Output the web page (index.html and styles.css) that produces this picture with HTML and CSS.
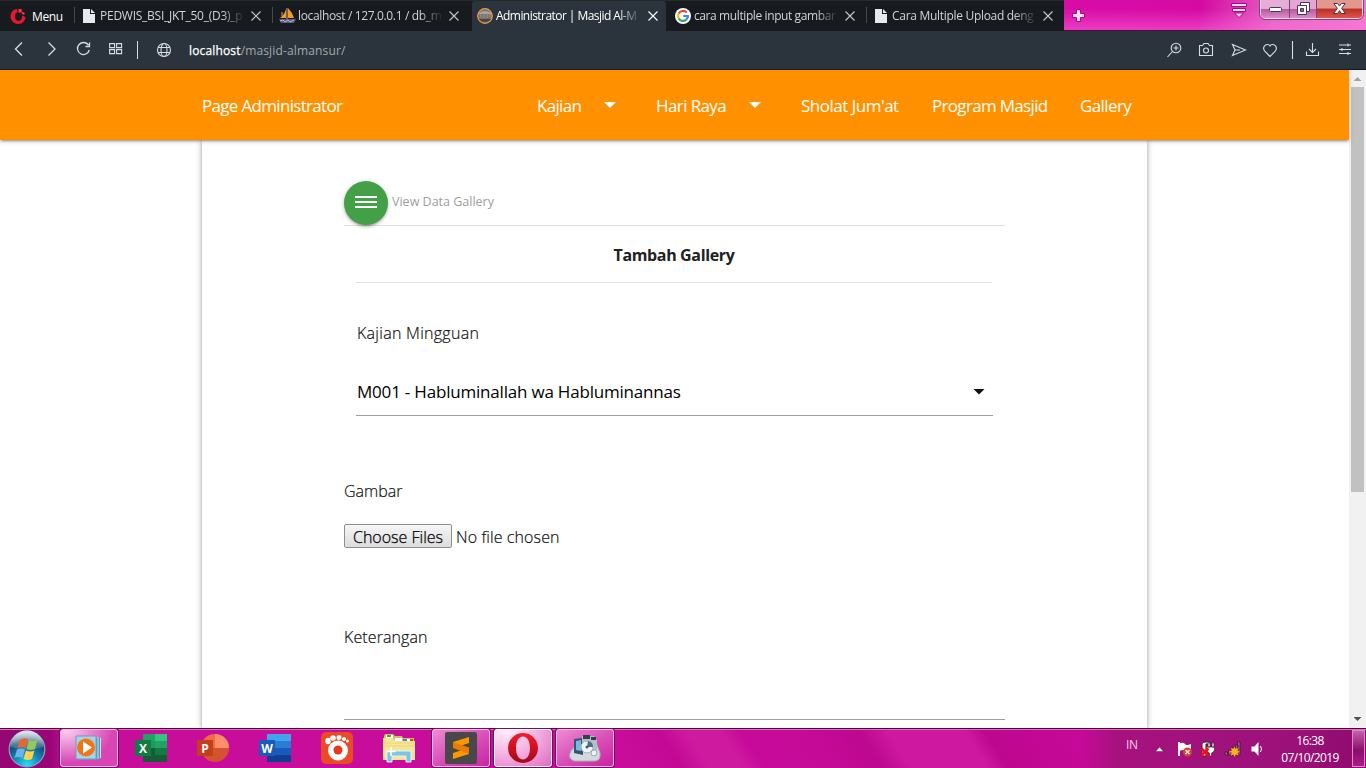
FILE: index.html
```html
<!DOCTYPE html>
<html lang="id">
<head>
<meta charset="utf-8">
<title>Administrator | Masjid Al-Mansur</title>
<link rel="stylesheet" href="styles.css">
</head>
<body>
<header class="tabs">
  <div class="menu">
    <svg width="17" height="17" viewBox="0 0 17 17"><path d="M7 1C3 1.500 .5 4.500 .5 8.500S4 16 8.300 16c4 0 7-3 7.200-7L12 7.500c.3 3-1.200 5.300-3.500 5.300S4.800 11 4.800 8.500 6.300 4.500 7.800 4z" fill="#e9162f"/><path d="M8.500 1h3.200v3.600H8.500z" fill="#ff3145"/><path d="M12.500 3.500l2.600 2-1.500 1.500-2-1.500z" fill="#ff3145"/></svg>
    <span>Menu</span>
  </div>
  <div class="tab sep">
    <svg class="fav" width="12" height="14" viewBox="0 0 12 14"><path d="M0 0h7v5h5v9H0zM8 0l4 4H8z" fill="#e6eaed"/></svg>
    <span class="t t1">PEDWIS_BSI_JKT_50_(D3)_p</span>
    <svg class="x" width="10" height="10" viewBox="0 0 10 10"><path d="M.5.5l9 9M9.500.5l-9 9"/></svg>
  </div>
  <div class="tab sep tab2">
    <svg class="fav" width="17" height="16" viewBox="0 0 17 16"><path d="M7 1v9H1q5-4 6-9M9 0q4 4 6 10H9z" fill="#f29b27"/><path d="M8 0v11M3 4v4" stroke="#c9a78c"/><path d="M0 11h17l-2 4H2z" fill="#565b87"/><path d="M1 13l3-1 2 2 3-2 2 2 4-2" stroke="#bbb" fill="none"/></svg>
    <span class="t t2">localhost / 127.0.0.1 / db_m</span>
    <svg class="x" width="10" height="10" viewBox="0 0 10 10"><path d="M.5.5l9 9M9.500.5l-9 9"/></svg>
  </div>
  <div class="tab active">
    <svg class="fav" width="16" height="16" viewBox="0 0 16 16"><circle cx="8" cy="8" r="7.300" fill="#76726f" stroke="#f19b35" stroke-width="1.200"/><path d="M2 5q6-4 12 0v1H2z" fill="#a6a4a5"/><path d="M4 6v4M7 5v5M10 5v5M13 6v3" stroke="#98928d"/><path d="M2 11h12q-2 3-6 3t-6-3" fill="#494447"/></svg>
    <span class="t t3">Administrator | Masjid Al-M</span>
    <svg class="x" width="10" height="10" viewBox="0 0 10 10"><path d="M.5.5l9 9M9.500.5l-9 9"/></svg>
  </div>
  <div class="tab tab4">
    <svg class="fav" width="16" height="16" viewBox="0 0 16 16"><circle cx="8" cy="8" r="8" fill="#fff"/><g fill="none" stroke-width="2.200"><path d="M11.700 4.500A5 5 0 0 0 3.700 5.500" stroke="#ea4335"/><path d="M3.700 5.500a5 5 0 0 0 0 5" stroke="#fbbc05"/><path d="M3.700 10.500a5 5 0 0 0 7.600 1.200" stroke="#34a853"/><path d="M11.300 11.700A5 5 0 0 0 13 8H8.300" stroke="#4285f4"/></g></svg>
    <span class="t t4">cara multiple input gambar</span>
    <svg class="x" width="10" height="10" viewBox="0 0 10 10"><path d="M.5.5l9 9M9.500.5l-9 9"/></svg>
  </div>
  <div class="tab sepl tab5">
    <svg class="fav" width="12" height="14" viewBox="0 0 12 14"><path d="M0 0h7v5h5v9H0zM8 0l4 4H8z" fill="#e6eaed"/></svg>
    <span class="t t5">Cara Multiple Upload deng</span>
    <svg class="x" width="10" height="10" viewBox="0 0 10 10"><path d="M.5.5l9 9M9.500.5l-9 9"/></svg>
  </div>
  <div class="aero">
    <svg class="plus" width="13" height="13" viewBox="0 0 13 13"><path d="M4.500 .5h4v4h4v4h-4v4h-4v-4h-4v-4h4z" fill="#ffd9f3" stroke="#a30d81"/></svg>
    <svg class="recent" width="16" height="15" viewBox="0 0 16 15"><path d="M.5.5h15v3H.5zM1.500 5.500h13v3h-13zM3.500 10h9L8 14.500z" fill="#ffd9f3" stroke="#a30d81"/></svg>
    <div class="winbtns">
      <div class="wb w1"><svg width="13" height="7" viewBox="0 0 13 7"><rect x=".5" y="1.500" width="12" height="4" rx="1" fill="#fff" stroke="#4a3852"/></svg></div>
      <div class="wb w2"><svg width="13" height="13" viewBox="0 0 13 13"><g fill="#fff" stroke="#4a3852"><path d="M3.500.5h9v9h-9z"/><path d="M.5 3.500h9v9h-9z"/><path d="M3.500 6.500h3v3h-3z" fill="#b34b9c"/></g></svg></div>
      <div class="wb w3"><svg width="13" height="11" viewBox="0 0 13 11"><path d="M.8.5h3.700l2 2.600 2-2.600h3.700L8.600 5.300l3.800 5.200H8.500l-2-2.800-2 2.800H.6l3.800-5.200z" fill="#fff" stroke="#4a3540"/></svg></div>
    </div>
  </div>
</header>

<div class="address">
  <svg width="345" height="38" viewBox="0 0 345 38" class="lefticons"><g fill="none" stroke="#d7dde1" stroke-width="1.300"><path d="M22 11.500l-6.500 6.500 6.500 6.500M48.500 11.500L55 18l-6.500 6.500"/><path d="M88.500 14.200A6 6 0 1 0 89.300 19M89.500 11.500v4h-4"/><path d="M109.600 12.600h5v4h-5zM116.600 12.600h5v4h-5zM109.600 18.600h5v4h-5zM116.600 18.600h5v4h-5z" stroke-width="1.100"/><path d="M137.500 10v18" stroke-width="1"/><g stroke-width="1.100"><circle cx="164" cy="19" r="6.500"/><ellipse cx="164" cy="19" rx="3" ry="6.500"/><path d="M158 16.500h12M158 21.500h12"/></g></g></svg>
  <p class="url"><b>localhost</b>/masjid-almansur/</p>
  <svg class="righticons" width="200" height="38" viewBox="1160 0 200 38"><g fill="none" stroke="#d7dde1" stroke-width="1.100"><circle cx="1176" cy="17" r="4.800"/><path d="M1172.500 20.500l-5 5.500M1173.500 17h5M1176 14.500v5"/><path d="M1199.500 14.500h3l1.500-2h4l1.500 2h3v10h-13z"/><circle cx="1206" cy="19.500" r="2.500"/><path d="M1232.500 13.500l13 5.500-13 5.500 2.500-5.500zM1235 19h5"/><path d="M1270 25.500l-5-5c-4-5 2.500-9.500 5-5.500 2.500-4 9 .5 5 5.500z"/><path d="M1292.500 10v18M1312.500 12v9M1309 18l3.500 3.500 3.500-3.500M1306.500 20.500v4h12v-4"/><path d="M1339 14h12M1339 18.500h12M1339 22.500h12M1348 12.500v3M1342 17v3M1348 21v3"/></g></svg>
</div>

<div class="viewport">
  <main class="page">
    <nav class="nav">
      <a class="brand">Page Administrator</a>
      <a class="n1">Kajian</a><i class="caret c1"></i>
      <a class="n2">Hari Raya</a><i class="caret c2"></i>
      <a class="n3">Sholat Jum'at</a>
      <a class="n4">Program Masjid</a>
      <a class="n5">Gallery</a>
    </nav>
    <section class="card">
      <div class="view-row">
        <span class="round"><i></i><i></i><i></i></span>
        <span class="view-text">View Data Gallery</span>
      </div>
      <h1 class="title"><span>Tambah Gallery</span></h1>
      <label class="label kajian"><span>Kajian Mingguan</span></label>
      <div class="select"><span class="value">M001 - Habluminallah wa Habluminannas</span><i class="caret dark"></i></div>
      <label class="label gambar"><span>Gambar</span></label>
      <div class="file"><span class="choose"><span>Choose Files</span></span><span class="nofile">No file chosen</span></div>
      <label class="label ket"><span>Keterangan</span></label>
      <div class="field"></div>
    </section>
  </main>
  <aside class="scroll"><i class="up"></i><div class="thumb"></div><i class="down"></i></aside>
</div>

<footer class="taskbar">
  <div class="start"><svg width="38" height="38" viewBox="0 0 38 38"><defs><radialGradient id="orb" cx=".5" cy=".95" r=".9"><stop offset="0" stop-color="#26e0ff"/><stop offset=".4" stop-color="#1687b7"/><stop offset=".75" stop-color="#174871"/><stop offset="1" stop-color="#7c9bb0"/></radialGradient><linearGradient id="shine" x2="0" y2="1"><stop stop-color="#fff" stop-opacity=".75"/><stop offset="1" stop-color="#fff" stop-opacity=".1"/></linearGradient></defs><circle cx="19" cy="19" r="17.800" fill="url(#orb)" stroke="#80a9bf" stroke-width="1.200"/><path d="M2.500 17a16.500 16.500 0 0 1 33 0q-15 5-33 0" fill="url(#shine)"/><path d="M12 10q4-3 8-1l-2.500 9q-4-2-8 0z" fill="#ec642c"/><path d="M21 10q4 2 8.500 0L27 19q-4 2-8.500 0z" fill="#94c75c"/><path d="M9 19.500q4-2 8 0l-2.500 8.500q-4-2-8 0z" fill="#67b5e9"/><path d="M18 20.500q4 2 8.500 0L24 29q-4 2-8.500 0z" fill="#ffd34a"/></svg></div>
  <div class="task on wmp"><svg width="27" height="26" viewBox="0 0 27 26"><path d="M5 2l21 1v20l-4 2H5z" fill="#5597c0"/><path d="M1 1h20v23H1z" fill="#abd1e9" stroke="#6b9ebd"/><path d="M23 2v22M25.500 3v20" stroke="#c5e7f5"/><circle cx="11" cy="12.500" r="9" fill="#ee7615"/><path d="M8 6.500l9 6-9 6z" fill="#fff"/></svg></div>
  <div class="task"><svg width="32" height="28" viewBox="0 0 32 28"><path d="M8 0h12v28H8z" fill="#21a366"/><path d="M20 0h12v7H20z" fill="#33c481"/><path d="M8 7h12v7H8z" fill="#1b9a5e"/><path d="M20 7h12v7H20z" fill="#21a366"/><path d="M8 14h12v14H8z" fill="#185c37"/><path d="M20 14h12v7H20z" fill="#107c41"/><path d="M20 21h12v7H20z" fill="#185c37"/><path d="M0 6h16v16H0z" fill="#107c41"/><text x="8" y="18.500" class="ol">X</text></svg></div>
  <div class="task"><svg width="32" height="28" viewBox="0 0 32 28"><circle cx="18" cy="14" r="14" fill="#d35230"/><path d="M18 0v14h14A14 14 0 0 0 18 0" fill="#ff8f6b"/><path d="M18 0A14 14 0 0 0 4 14h14z" fill="#ed6c47"/><path d="M0 6h16v16H0z" fill="#c43e1c"/><text x="8" y="18.500" class="ol">P</text></svg></div>
  <div class="task"><svg width="32" height="28" viewBox="0 0 32 28"><path d="M8 0h24v7H8z" fill="#41a5ee"/><path d="M8 7h24v7H8z" fill="#2b7cd3"/><path d="M8 14h24v7H8z" fill="#185abd"/><path d="M8 21h24v7H8z" fill="#103f91"/><path d="M0 6h16v16H0z" fill="#185abd"/><text x="8" y="18.500" class="ol">W</text></svg></div>
  <div class="task"><svg width="32" height="32" viewBox="0 0 32 32"><rect width="32" height="32" rx="5" fill="#ed4924"/><g fill="#fff"><circle cx="17" cy="18.500" r="10"/><ellipse cx="7" cy="9" rx="2.700" ry="3.300"/><circle cx="12" cy="6" r="2.800"/><circle cx="18" cy="5.500" r="2.500"/><circle cx="23" cy="7" r="2"/><circle cx="26.500" cy="9" r="1.500"/></g><circle cx="17" cy="18" r="4.500" fill="#e6381e"/></svg></div>
  <div class="task"><svg width="32" height="30" viewBox="0 0 32 30"><path d="M1 3l1-2h8l2 2h7l1 2h11v22H1z" fill="#d9bd5d"/><path d="M3 2h7v4H3z" fill="#fff"/><path d="M4 2h4v2H4z" fill="#20b64b"/><path d="M12 5h7v3h-7zM21 6h8v3h-8z" fill="#fff"/><path d="M20 6h4v2h-4z" fill="#398ad8"/><path d="M27 6h3v2h-3z" fill="#da3f32"/><path d="M0 5h10l2 3h20v19H0z" fill="#f7e596"/><path d="M1 10h30M1 13h30" stroke="#ecd47a"/><path d="M4 29V18h24v11h-5v-6H9v6z" fill="#7fc4e2" stroke="#daf5ff"/><path d="M8 14v9M3.500 18.500h9" stroke="#fff" stroke-width="1.500"/></svg></div>
  <div class="task on subl"><svg width="32" height="32" viewBox="0 0 32 32"><rect width="32" height="32" rx="2" fill="#484848"/><path d="M8 10l16-5v6l-9 3 9 3v5L8 27v-6l9-3-9-3z" fill="#ff9800"/><path d="M8 10l16 5.500V22L8 16z" fill="#e97d00"/></svg></div>
  <div class="task on bright"><svg width="32" height="32" viewBox="0 0 32 32"><defs><linearGradient id="op" x2="0" y2="1"><stop stop-color="#f51b2b"/><stop offset="1" stop-color="#a30815"/></linearGradient></defs><path d="M16 1a15 15 0 1 0 0 30 15 15 0 0 0 0-30m0 3.500c4.500 0 7 5 7 11.500s-2.500 11.500-7 11.500S9 22.500 9 16 11.500 4.500 16 4.500" fill="url(#op)" fill-rule="evenodd"/></svg></div>
  <div class="task on cam"><svg width="32" height="28" viewBox="0 0 32 28"><path d="M2 17q-4 7 3 10h20q7 0 6-8l-3-8H7z" fill="#d3dadd" stroke="#a5b1b9"/><path d="M5 5l9-1v17l-9-2z" fill="#34556e"/><path d="M7 7l5-1v11l-5-1z" fill="#78b7df"/><path d="M13 2h12l3 4v10H13z" fill="#b3c0c8"/><path d="M14 1h7v4h-7zM22 3h5v3h-5z" fill="#343f46"/><circle cx="18" cy="13" r="6" fill="#eef5fa" stroke="#a3b2bd"/><path d="M18 13l1-6a6 6 0 0 1 5 6z" fill="#4e6c84"/><circle cx="18" cy="13" r="1.500" fill="#4a5963"/><circle cx="25" cy="19" r="3" fill="#eef2f4" stroke="#9aa8b1"/></svg></div>
  <div class="tray">
    <span class="lang">IN</span>
    <svg class="trayicons" width="115" height="20" viewBox="1152 0 115 20"><path d="M1155.500 12.500h8l-4-4.500z" fill="#fff" stroke="#5e1651" stroke-width=".5"/><g><path d="M1178 3h2v14h-2zM1180 4q4-1 5 1t6 0v8q-4 1-6-1t-5 0z" fill="#fff"/><circle cx="1187.500" cy="13" r="4.500" fill="#df3e2b"/><path d="M1185.500 11l4 4M1189.500 11l-4 4" stroke="#fff" stroke-width="1.400"/></g><g><path d="M1202 5q0-2 3-2h5v2h-4v12h-4z" fill="#eee" stroke="#40253d"/><path d="M1206.500 8h8v3q-1 3-3 3v3h-2v-3q-2 0-3-3zM1208 4h2v4h-2zM1212 4h2v4h-2z" fill="#fff" stroke="#40253d" stroke-width=".7"/><path d="M1201.500 9.500l7 7M1208.500 9.500l-7 7" stroke="#f10e16" stroke-width="2.600"/></g><g fill="#9c6387" stroke="#48103c" stroke-width=".7"><path d="M1225 13h2.500v3h-2.500zM1228.500 11h2.500v5h-2.500zM1232 8.500h2.500V16h-2.500zM1235.500 6h2.500v10h-2.500zM1237.500 3h2.500v13h-2.500z"/></g><path d="M1234.500 7.500l1.200 2.500 2.700-1-.9 2.700 2.500 1.100-2.500 1.200 1 2.500-2.700-1-1.300 2.500-1.100-2.500-2.700 1 1-2.700-2.500-1.100 2.600-1.200-1-2.500 2.600 1z" fill="#ffb20c"/><path d="M1251.500 7.500h3l4-4.500v14l-4-4.500h-3z" fill="#fff"/><path d="M1260.500 7q2 3 0 6" stroke="#fff" fill="none"/></svg>
    <div class="clock"><span class="time">16:38</span><span class="date">07/10/2019</span></div>
    <div class="desk"></div>
  </div>
</footer>
</body>
</html>
```
FILE: styles.css
```css
* { box-sizing: border-box; }
body { margin: 0; width: 1366px; height: 768px; overflow: hidden; display: flex; flex-direction: column; background: #fff; font-family: "Open Sans", "Noto Sans", sans-serif; }
p, h1 { margin: 0; }
svg { display: block; flex: none; }
span, a { white-space: nowrap; }

.tabs { display: flex; height: 31px; flex: none; background: #171a1f; border-top: 1px solid #272b2b; font-size: 12px; letter-spacing: -.35px; color: #d0d4d7; }
.menu { width: 74px; padding-left: 10px; display: flex; align-items: center; gap: 5px; color: #fff; flex: none; letter-spacing: -.4px; }
.tab { display: flex; align-items: center; width: 198px; flex: none; position: relative; padding-left: 9px; }
.sep::before, .sepl::before { content: ""; position: absolute; left: 0; top: 6px; width: 1px; height: 16px; background: #464a50; }
.tab2 { padding-left: 7px; width: 200px; }
.active { width: 194px; padding-left: 5px; background: #2b343d; border-radius: 3px 3px 0 0; color: #fff; }
.tab4 { width: 200px; padding-left: 9px; }
.tab5 { padding-left: 9px; }
.t { overflow: hidden; flex: none; margin-left: 5px; width: 145px; line-height: 18px; -webkit-mask-image: linear-gradient(90deg, #000 84%, transparent); mask-image: linear-gradient(90deg, #000 84%, transparent); }
.t1 { letter-spacing: -.25px; }
.t2 { margin-left: 2px; }
.t3 { margin-left: 3px; letter-spacing: -.55px; }
.t4 { margin-left: 3px; letter-spacing: -.4px; }
.t5 { letter-spacing: -.3px; }
.x { position: absolute; right: 11px; top: 10px; fill: none; stroke: #c6cacd; stroke-width: 1.100; }
.tab2 .x { right: 13px; }
.active .x { right: 8px; stroke: #fff; }
.aero { flex: 1; margin-top: -1px; display: flex; background: linear-gradient(180deg, rgba(255,90,210,0) 30%, rgba(255,110,220,.5)), linear-gradient(100deg, #d80da8, #d50aa3 45%, #e665c4 70%, #ef7bce); border-bottom: 1px solid #4a0a3c; }
.plus { margin: 9px 0 0 8px; }
.recent { margin: 3px 0 0 146px; }
.winbtns { display: flex; margin-left: 13px; width: 103px; height: 19px; border: 1px solid #fbd3ee; border-top: 0; border-radius: 0 0 5px 5px; outline: 1px solid #8a3f77; overflow: hidden; }
.wb { display: flex; align-items: center; justify-content: center; height: 18px; padding-bottom: 2px; }
.w1 { width: 29px; padding-top: 3px; background: linear-gradient(#e6add7 48%, #b8579f 50%, #d98dc5); border-right: 1px solid #7b4370; }
.w2 { width: 27px; background: linear-gradient(#e3a5d2 48%, #b8579f 50%, #d98dc5); border-right: 1px solid #7b4370; }
.w3 { flex: 1; background: linear-gradient(#e3988f 45%, #bd2e25 50%, #dd5647); }

.address { display: flex; height: 39px; flex: none; background: #2b343d; border-bottom: 1px solid #14181c; }
.lefticons { margin-right: -156px; }
.url { width: 969px; font-size: 12px; line-height: 39px; letter-spacing: .15px; color: #a3a9ae; white-space: nowrap; }
.url b { font-weight: 400; color: #fff; -webkit-text-stroke: .25px #fff; }
.righticons { margin-left: 2px; }

.viewport { display: flex; height: 658px; flex: none; overflow: hidden; }
.page { width: 1349px; flex: none; }
.nav { height: 70px; padding-left: 202px; display: flex; align-items: center; position: relative; z-index: 2; background: #ff9100; color: #fff; font-size: 17px; line-height: 24px; letter-spacing: -.68px; box-shadow: 0 2px 2px 0 rgba(0,0,0,.14), 0 3px 1px -2px rgba(0,0,0,.12), 0 1px 5px 0 rgba(0,0,0,.2); }
.nav a { padding-top: 2px; flex: none; }
.brand { width: 335px; }
.n1 { width: 67px; }
.c1 { margin-right: 40px; }
.n2 { width: 93px; letter-spacing: -.6px; }
.c2 { margin-right: 40px; }
.n3 { width: 131px; letter-spacing: -.5px; }
.n4 { width: 148px; }
.n5 { letter-spacing: -.6px; }
.caret { width: 12px; height: 6px; flex: none; background: #fff; clip-path: polygon(0 0, 100% 0, 50% 100%); }
.card { margin-left: 202px; width: 945px; height: 588px; padding: 41px 142px 0; background: #fff; box-shadow: 0 2px 4px rgba(0,0,0,.25), 0 0 7px rgba(0,0,0,.2); }
.view-row { height: 45px; border-bottom: 1px solid #e0e0e0; display: flex; }
.round { width: 44px; height: 44px; flex: none; border-radius: 50%; background: #43a047; display: flex; flex-direction: column; align-items: center; gap: 3px; padding-top: 15px; box-shadow: 0 2px 2px 0 rgba(0,0,0,.14), 0 3px 1px -2px rgba(0,0,0,.12), 0 1px 5px 0 rgba(0,0,0,.2); }
.round i { width: 22px; height: 2px; background: #fff; }
.view-text { margin-left: 4px; font-size: 12.500px; line-height: 42px; color: #9e9e9e; }
.title { margin: 0 13px 0 12px; height: 57px; border-bottom: 1px solid #e0e0e0; text-align: center; font-size: 16px; line-height: 58px; font-weight: 700; letter-spacing: -.35px; color: #212121; }
.label { display: block; height: 24px; line-height: 24px; font-size: 16px; font-weight: 300; color: #111; }
.label span, .nofile { -webkit-text-stroke: .2px #111; }
.kajian { margin: 38px 0 0 13px; letter-spacing: .28px; }
.select { margin: 23px 12px 0; height: 48px; border-bottom: 1px solid #9e9e9e; display: flex; justify-content: space-between; align-items: center; padding: 0 8px 0 1px; font-size: 17px; letter-spacing: -.2px; color: #000; }
.value { padding-bottom: 1px; }
.dark { background: #111; }
.gambar { margin-top: 63px; }
.file { margin-top: 21px; height: 24px; display: flex; line-height: 27px; font-size: 16px; font-weight: 300; color: #111; }
.choose { width: 108px; flex: none; border: 1px solid #8f8f8f; border-radius: 2px; background: linear-gradient(#f6f6f6, #dcdcdc); text-align: center; line-height: 25px; color: #000; -webkit-text-stroke: .25px #000; }
.nofile { margin-left: 4px; letter-spacing: .1px; }
.ket { margin-top: 77px; letter-spacing: .1px; }
.field { height: 71px; border-bottom: 1px solid #9e9e9e; }
.scroll { width: 17px; background: #f1f1f1; display: flex; flex-direction: column; align-items: center; }
.up, .down { width: 8px; height: 4px; background: #a3a3a3; clip-path: polygon(50% 0, 100% 100%, 0 100%); margin-top: 7px; }
.thumb { width: 13px; height: 405px; margin-top: 6px; background: #c1c1c1; }
.down { margin-top: 225px; background: #505050; clip-path: polygon(0 0, 100% 0, 50% 100%); }

.taskbar { display: flex; height: 40px; flex: none; border-top: 1px solid #480838; box-shadow: inset 0 1px #e46cc7; background: linear-gradient(90deg, #950672 0, #980775 50px, #c80d9b 70px, transparent 100px), linear-gradient(57deg, #c80d9b 0 46%, #c20894 49%, #cd1a9f 51%, #cd1a9f 53.500%, #c60999 55%, #c60a98 59%, #bd0890 63.500%, #cd189f 65.500%, #cd189f 71%, #be078f 72.500%, #c7099a 80%); }
.start { width: 59px; padding: 1px 0 0 8px; flex: none; }
.task { width: 60px; height: 38px; margin-right: 2px; flex: none; display: flex; align-items: center; justify-content: center; }
.task svg { margin-left: -1px; }
.on { width: 58px; margin: 0 3px 0 1px; border: 1px solid #ffb8eb; border-radius: 3px; background: radial-gradient(ellipse at 10% 0, rgba(255,225,248,.9), rgba(255,220,245,.15) 65%), #d22ba8; box-shadow: 0 0 0 1px #730f5b; }
.subl, .cam { background: linear-gradient(150deg, #ee8bd3, #d84cb5 55%, #cb24a2); }
.bright { background: radial-gradient(ellipse at 20% 0, #fff0fb, #f2a9de 55%, #df6cc2); border-color: #fff; }
.ol { fill: #fff; font: 700 12px "Open Sans", sans-serif; text-anchor: middle; }
.tray { flex: 1; display: flex; color: #fff; font-size: 12px; letter-spacing: -.6px; min-width: 0; margin: 1px 0 0 464px; background: linear-gradient(90deg, transparent, #a7117e 35px, #9c127a 70%, #900a6e); }
.lang { width: 29px; margin-left: 45px; padding-top: 7px; font-size: 12px; line-height: 16px; letter-spacing: -.3px; color: #f1d0e8; flex: none; }
.trayicons { margin-top: 9px; margin-left: -3px; }
.clock { width: 82px; flex: none; display: flex; flex-direction: column; align-items: center; line-height: 17px; padding-top: 2px; margin-left: 2px; }
.desk { width: 13px; height: 37px; flex: none; margin-left: auto; margin-right: 1px; border: 1px solid #e087c9; background: linear-gradient(#c263a9, #8b0d6a 55%, #ac1b89); }
```
